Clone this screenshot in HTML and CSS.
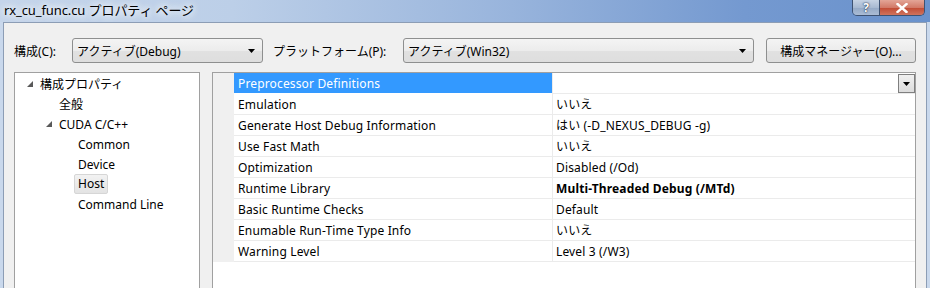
FILE: index.html
```html
<!DOCTYPE html>
<html lang="ja">
<head>
<meta charset="utf-8">
<title>rx_cu_func.cu プロパティ ページ</title>
<link rel="stylesheet" href="styles.css">
</head>
<body>
<div class="window">
  <div class="titlebar">
    <span class="title">rx_cu_func.cu プロパティ ページ</span>
    <div class="caption-buttons">
      <div class="cb help">?</div>
      <div class="cb close">
        <svg width="12" height="10" viewBox="0 0 12 10"><path d="M1.5 1 L10.5 9 M10.5 1 L1.5 9" stroke="#fff" stroke-width="2.4" stroke-linecap="square"/></svg>
      </div>
    </div>
  </div>
  <div class="frame">
    <div class="client">
      <div class="toolbar">
        <span class="lbl lbl1">構成(C):</span>
        <div class="combo combo1"><span class="combo-text">アクティブ(Debug)</span><svg class="arrow" width="7" height="4" viewBox="0 0 7 4"><path d="M0 0 H7 L3.5 4 Z" fill="#000"/></svg></div>
        <span class="lbl lbl2">プラットフォーム(P):</span>
        <div class="combo combo2"><span class="combo-text">アクティブ(Win32)</span><svg class="arrow" width="7" height="4" viewBox="0 0 7 4"><path d="M0 0 H7 L3.5 4 Z" fill="#000"/></svg></div>
        <button class="btn">構成マネージャー(O)...</button>
      </div>
      <div class="main">
        <div class="tree">
          <div class="node lv0"><svg class="exp" width="6" height="6" viewBox="0 0 6 6"><path d="M6 0 V6 H0 Z" fill="#595959"/></svg><span>構成プロパティ</span></div>
          <div class="node lv1"><span class="noexp"></span><span>全般</span></div>
          <div class="node lv1"><svg class="exp" width="6" height="6" viewBox="0 0 6 6"><path d="M6 0 V6 H0 Z" fill="#595959"/></svg><span>CUDA C/C++</span></div>
          <div class="node lv2"><span class="noexp"></span><span>Common</span></div>
          <div class="node lv2"><span class="noexp"></span><span>Device</span></div>
          <div class="node lv2"><span class="noexp"></span><span class="sel">Host</span></div>
          <div class="node lv2"><span class="noexp"></span><span>Command Line</span></div>
        </div>
        <div class="grid">
          <div class="row">
            <div class="gutter"></div>
            <div class="name selected">Preprocessor Definitions</div>
            <div class="value"><div class="dd"><svg width="7" height="4" viewBox="0 0 7 4"><path d="M0 0 H7 L3.5 4 Z" fill="#000"/></svg></div></div>
          </div>
          <div class="row"><div class="gutter"></div><div class="name">Emulation</div><div class="value">いいえ</div></div>
          <div class="row"><div class="gutter"></div><div class="name">Generate Host Debug Information</div><div class="value">はい (-D_NEXUS_DEBUG -g)</div></div>
          <div class="row"><div class="gutter"></div><div class="name">Use Fast Math</div><div class="value">いいえ</div></div>
          <div class="row"><div class="gutter"></div><div class="name">Optimization</div><div class="value">Disabled (/Od)</div></div>
          <div class="row"><div class="gutter"></div><div class="name">Runtime Library</div><div class="value bold">Multi-Threaded Debug (/MTd)</div></div>
          <div class="row"><div class="gutter"></div><div class="name">Basic Runtime Checks</div><div class="value">Default</div></div>
          <div class="row"><div class="gutter"></div><div class="name">Enumable Run-Time Type Info</div><div class="value">いいえ</div></div>
          <div class="row"><div class="gutter"></div><div class="name">Warning Level</div><div class="value">Level 3 (/W3)</div></div>
        </div>
      </div>
    </div>
  </div>
</div>
</body>
</html>
```
FILE: styles.css
```css
* { box-sizing: border-box; }
html, body { margin: 0; padding: 0; }
body {
  width: 930px;
  height: 288px;
  overflow: hidden;
  font-family: "Noto Sans", "Noto Sans CJK JP", sans-serif;
  font-size: 12px;
  color: #000;
  background: #c9d8ec;
}
.window {
  display: flex;
  flex-direction: column;
  height: 100%;
}
.titlebar {
  height: 22px;
  display: flex;
  align-items: flex-start;
  justify-content: space-between;
  background: linear-gradient(to right, #c5d5ea 0%, #bccfe8 25%, #98b4dc 55%, #7499d0 80%, #6a92cc 100%);
}
.title {
  font-size: 13px;
  line-height: 21px;
  padding-left: 4px;
  letter-spacing: -0.1px;
  color: #000;
  text-shadow: 0 0 6px #fff, 0 0 8px #fff, 0 0 10px #e8f0fa;
}
.caption-buttons {
  display: flex;
  margin-right: 5px;
  height: 16px;
  border: 1px solid #3d5272;
  border-top: none;
  border-radius: 0 0 5px 5px;
  overflow: hidden;
}
.cb {
  display: flex;
  align-items: center;
  justify-content: center;
  height: 15px;
}
.help {
  width: 27px;
  border-right: 1px solid #3d5272;
  background: linear-gradient(#c6d3e4, #a8bad2 50%, #94a9c6 51%, #aabcd5);
  color: #fff;
  font-weight: bold;
  font-size: 12px;
  text-shadow: 0 0 2px #1d2f4c, 0 0 1px #1d2f4c;
}
.close {
  width: 44px;
  background: linear-gradient(#e3a597, #d27a68 50%, #c14a33 51%, #d0735c);
}
.frame {
  flex: 1;
  display: flex;
  padding: 0 3px 0 3px;
  min-height: 0;
}
.client {
  flex: 1;
  border: 1px solid #8c9db5;
  border-bottom: none;
  background: #f0f0f0;
  padding: 15px 10px 0 10px;
  display: flex;
  flex-direction: column;
  min-height: 0;
}
.toolbar {
  display: flex;
  align-items: center;
  height: 25px;
  flex: none;
}
.lbl { white-space: nowrap; }
.lbl1 { width: 58px; }
.lbl2 { width: 130px; margin-left: 10px; }
.combo {
  height: 25px;
  display: flex;
  align-items: center;
  justify-content: space-between;
  border: 1px solid #8e8f8f;
  border-radius: 3px;
  background: linear-gradient(#f4f4f4, #ececec 50%, #e1e1e1 51%, #dedede);
  padding: 0 7px 0 4px;
}
.combo1 { width: 191px; }
.combo2 { width: 351px; }
.btn {
  flex: 1;
  margin-left: 12px;
  height: 25px;
  border: 1px solid #8e8f8f;
  border-radius: 3px;
  background: linear-gradient(#f4f4f4, #ececec 50%, #e1e1e1 51%, #dedede);
  font-family: inherit;
  font-size: 12px;
  color: #000;
  padding: 0;
}
.main {
  display: flex;
  gap: 12px;
  margin-top: 9px;
  flex: 1;
  min-height: 230px;
}
.tree {
  width: 186px;
  flex: none;
  background: #fff;
  border: 1px solid #a0a0a0;
  display: flex;
  flex-direction: column;
  padding-top: 1px;
}
.node {
  height: 20px;
  display: flex;
  align-items: center;
  white-space: nowrap;
}
.node.lv0 { padding-left: 12px; }
.node.lv1 { padding-left: 31px; }
.node.lv2 { padding-left: 50px; }
.exp { width: 13px; padding-right: 7px; flex: none; }
.noexp { width: 13px; flex: none; }
.sel {
  margin-left: -4px;
  padding: 0 3px;
  height: 20px;
  line-height: 18px;
  border: 1px solid #d6d6d6;
  border-radius: 2px;
  background: linear-gradient(#f2f2f2, #e3e3e3);
}
.grid {
  flex: 1;
  background: #fff;
  border: 1px solid #a0a0a0;
  display: flex;
  flex-direction: column;
}
.row {
  display: flex;
  height: 21px;
}
.gutter {
  width: 21px;
  flex: none;
  background: #f0f0f0;
}
.name {
  width: 318px;
  flex: none;
  padding-left: 4px;
  padding-top: 2px;
  line-height: 18px;
  border-bottom: 1px solid #ebebeb;
  white-space: nowrap;
  letter-spacing: 0.15px;
}
.name.selected {
  background: #3399ff;
  color: #fff;
  border-bottom-color: #fff;
}
.value {
  flex: 1;
  padding-left: 3px;
  padding-top: 2px;
  line-height: 18px;
  border-left: 1px solid #ebebeb;
  border-bottom: 1px solid #ebebeb;
  white-space: nowrap;
  display: flex;
  letter-spacing: 0.15px;
}
.value.bold { font-weight: bold; }
.value:has(.dd) { padding-top: 0; }
.dd {
  margin-left: auto;
  margin-top: 1px;
  margin-right: 0;
  width: 17px;
  height: 19px;
  border: 1px solid #7f7f7f;
  background: linear-gradient(#f0f0f0, #dcdcdc);
  display: flex;
  align-items: center;
  justify-content: center;
}
```
